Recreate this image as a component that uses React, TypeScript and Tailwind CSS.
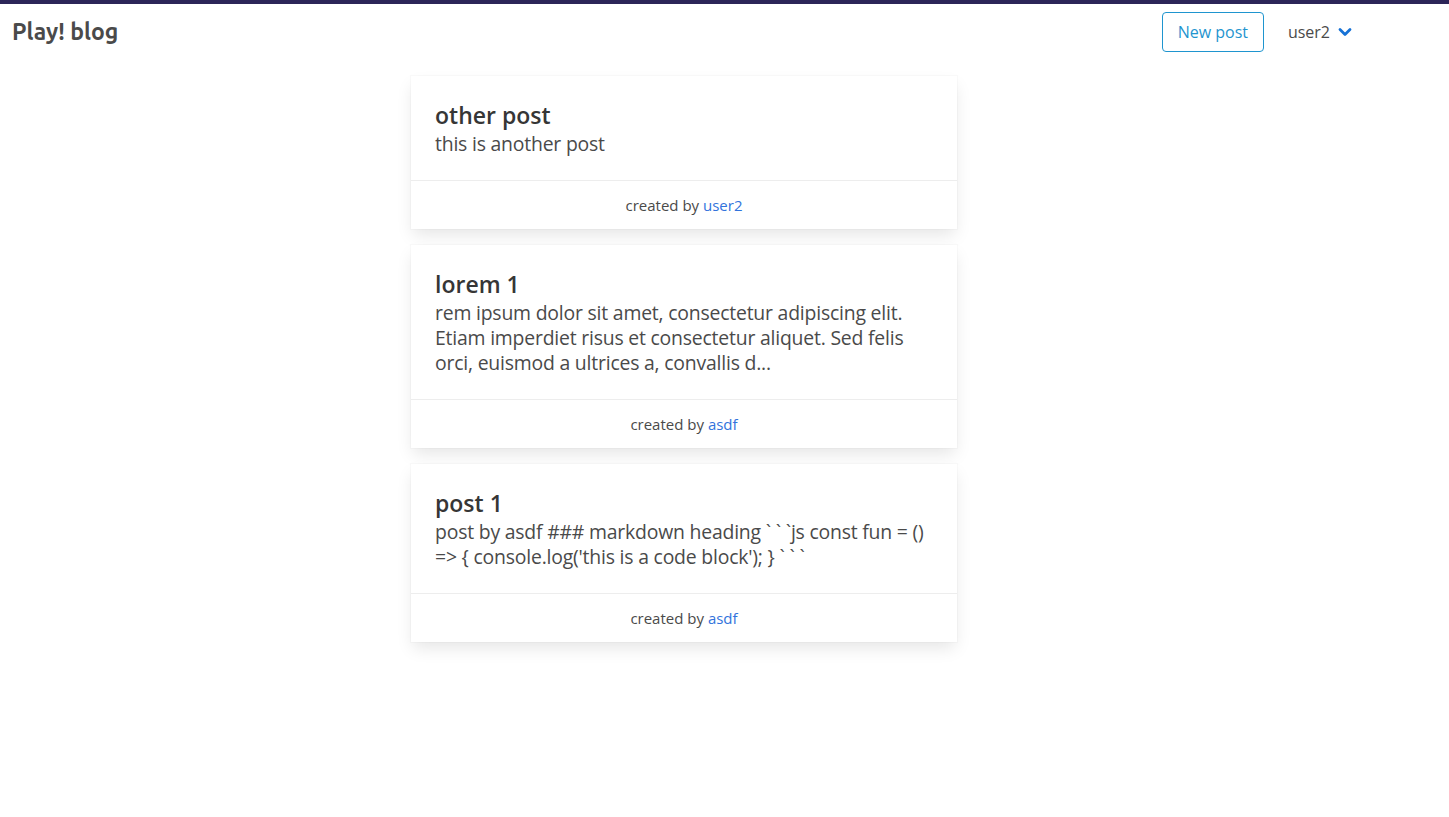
import React from 'react';

interface Post {
  title: string;
  body: string;
  author: string;
}

const posts: Post[] = [
  { title: 'other post', body: 'this is another post', author: 'user2' },
  {
    title: 'lorem 1',
    body: 'rem ipsum dolor sit amet, consectetur adipiscing elit. Etiam imperdiet risus et consectetur aliquet. Sed felis orci, euismod a ultrices a, convallis d...',
    author: 'asdf',
  },
  {
    title: 'post 1',
    body: "post by asdf ### markdown heading ` ` `js const fun = () => { console.log('this is a code block'); } ` ` `",
    author: 'asdf',
  },
];

function PostCard({ post }: { post: Post }) {
  return (
    <div className="bg-white shadow-[0_0.5em_1em_-0.125em_rgba(10,10,10,0.1),0_0_0_1px_rgba(10,10,10,0.02)]">
      <div className="p-6">
        <h2 className="text-[23px] leading-[31px] font-semibold text-[#363636]">{post.title}</h2>
        <p className="text-[19.4px] leading-[25px] tracking-[-0.2px] text-[#4a4a4a]">{post.body}</p>
      </div>
      <div className="border-t border-[#ededed] h-[49px] flex items-center justify-center text-[15px] text-[#4a4a4a]">
        <span>
          created by <a className="text-[#3273dc]">{post.author}</a>
        </span>
      </div>
    </div>
  );
}

export default function App() {
  return (
    <div className="min-h-screen bg-white font-['Open_Sans',sans-serif]">
      <nav className="border-t-4 border-[#2c2558] h-[60px] flex items-center">
        <div className="pl-3 text-[23px] font-bold text-[#4a4a4a] font-['Ubuntu','Open_Sans',sans-serif]">
          Play! blog
        </div>
        <div className="ml-auto mr-[97px] flex items-center">
          <button className="h-10 w-[102px] border border-[#1f95cf] rounded-[4px] text-[16px] text-[#1f95cf] flex items-center justify-center">
            New post
          </button>
          <div className="ml-6 flex items-center text-[16px] text-[#4a4a4a]">
            <span>user2</span>
            <svg className="ml-2 w-[14px] h-[10px]" viewBox="0 0 14 10">
              <path d="M2 2.5 L7 7.5 L12 2.5" fill="none" stroke="#1672d6" strokeWidth="2.8" strokeLinecap="round" strokeLinejoin="round" />
            </svg>
          </div>
        </div>
      </nav>
      <main className="pt-4 pl-[411px]">
        <div className="w-[546px] flex flex-col gap-4">
          {posts.map((p) => (
            <PostCard key={p.title} post={p} />
          ))}
        </div>
      </main>
    </div>
  );
}
